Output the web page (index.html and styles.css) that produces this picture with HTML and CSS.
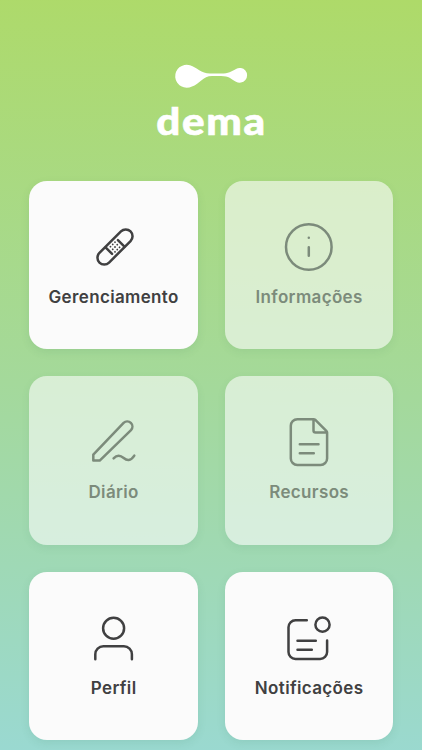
FILE: index.html
```html
<!DOCTYPE html>
<html lang="pt-BR">
<head>
    <meta charset="UTF-8">
    <meta name="viewport" content="width=device-width, initial-scale=1.0">
    <title>dema</title>
    <link rel="stylesheet" href="styles.css">
</head>
<body>

<header class="logo">
    <svg width="120" height="100" viewBox="0 0 120 100">
        <path d="M39 10.2C46 12.2 50 18.5 59 18.5H70C78 18.5 80 16.5 85 13.9A7.4 7.4 0 1 1 85 26.7C80 24 78 21 70 21H61C52 21 48 29.4 41 31.4A11.5 11.5 0 1 1 39 10.2Z"/>
        <text x="5.3" y="79.5" textLength="110.5" lengthAdjust="spacingAndGlyphs">dema</text>
    </svg>
</header>

<main class="menu">
    <a class="card">
        <svg class="icon" viewBox="0 0 60 60">
            <g transform="translate(31 30) rotate(-45)">
                <rect x="-22" y="-6.8" width="44" height="13.6" rx="6.8"/>
                <path d="M-6.9 -6.5V2.8M6.9 6.5V-2.8"/>
                <path class="dots" d="M-3 -3.4h0M0.2 -3.4h0M3.4 -3.4h0M-3.2 0h0M0 0h0M3.2 0h0M-3.4 3.4h0M-0.2 3.4h0M3 3.4h0"/>
            </g>
        </svg>
        <span class="label">Gerenciamento</span>
    </a>
    <a class="card disabled">
        <svg class="icon" viewBox="0 0 60 60">
            <circle cx="29.8" cy="30" r="22.8"/>
            <path d="M29.8 30.3V38.8M29.8 20.7h0"/>
        </svg>
        <span class="label">Informações</span>
    </a>
    <a class="card disabled">
        <svg class="icon" viewBox="0 0 60 60">
            <path d="M9.3 48.6V42.6L39.6 10.9A5.2 5.2 0 0 1 47 18.2L15.7 48.6Z"/>
            <path d="M29.6 46.4C33 42.7 36.5 43.2 39.7 46S46.5 49.5 50.3 43.6"/>
        </svg>
        <span class="label">Diário</span>
    </a>
    <a class="card disabled">
        <svg class="icon" viewBox="0 0 60 60">
            <path d="M34.5 7.3H18.3A6.5 6.5 0 0 0 11.8 13.8V46.4A6.5 6.5 0 0 0 18.3 52.9H41.6A6.5 6.5 0 0 0 48.1 46.4V20.5Q48.1 19.6 47.3 18.8L36.6 8.1Q35.6 7.3 34.5 7.3V18.4Q34.5 20.4 36.5 20.4H48"/>
            <path d="M20.8 32.3H39.5M20.8 41.3H34.8"/>
        </svg>
        <span class="label">Recursos</span>
    </a>
    <a class="card">
        <svg class="icon" viewBox="0 0 60 60">
            <circle cx="29.6" cy="20.3" r="10.5"/>
            <path d="M11.3 51.2V46.3A8 8 0 0 1 19.3 38.3H39.9A8 8 0 0 1 47.9 46.3V51.2"/>
        </svg>
        <span class="label">Perfil</span>
    </a>
    <a class="card">
        <svg class="icon" viewBox="0 0 60 60">
            <path d="M27.8 12.3H16.5A7 7 0 0 0 9.5 19.3V44A7 7 0 0 0 16.5 51H41.1A7 7 0 0 0 48.1 44V32.5"/>
            <circle cx="43.5" cy="16.7" r="7.1"/>
            <path d="M18.5 32.7H36.8M18.5 41.7H32.8"/>
        </svg>
        <span class="label">Notificações</span>
    </a>
</main>

</body>
</html>
```

FILE: styles.css
```css
body {
    margin: 0;
    height: 750px;
    overflow: hidden;
    font-family: Inter, "Liberation Sans", sans-serif;
    background: linear-gradient(182deg, #aeda69 0%, #a4d99b 52%, #9ad9d1 100%);
}
.logo {
    box-sizing: border-box;
    height: 180.8px;
    padding-top: 55px;
}
.logo svg {
    display: block;
    margin: 0 auto;
    fill: #fff;
}
.logo text {
    font-family: Lato, sans-serif;
    font-size: 37.5px;
    font-weight: 900;
    letter-spacing: 1.5px;
    stroke: #fff;
    stroke-width: 0.6px;
}
.menu {
    display: grid;
    grid-template-columns: 168.5px 168.5px;
    grid-auto-rows: 168.5px;
    gap: 27px;
    justify-content: center;
    padding-left: 0.8px;
}
.card {
    display: flex;
    flex-direction: column;
    align-items: center;
    box-sizing: border-box;
    padding-top: 36px;
    border-radius: 18px;
    background-color: #fbfbfb;
    box-shadow: 0 3px 8px rgba(60, 120, 90, 0.12);
    color: #404041;
}
.disabled {
    background-color: rgba(251, 251, 251, 0.6);
    box-shadow: 0 3px 8px rgba(60, 120, 90, 0.09);
    color: #7c8b7b;
}
.icon {
    width: 60px;
    height: 60px;
    fill: none;
    stroke: currentColor;
    stroke-width: 2.5;
    stroke-linecap: round;
    stroke-linejoin: round;
}
.dots {
    stroke-width: 1.8;
}
.label {
    margin-top: 9px;
    font-size: 17px;
    font-weight: 600;
    line-height: 22px;
    letter-spacing: 0.35px;
}
```
